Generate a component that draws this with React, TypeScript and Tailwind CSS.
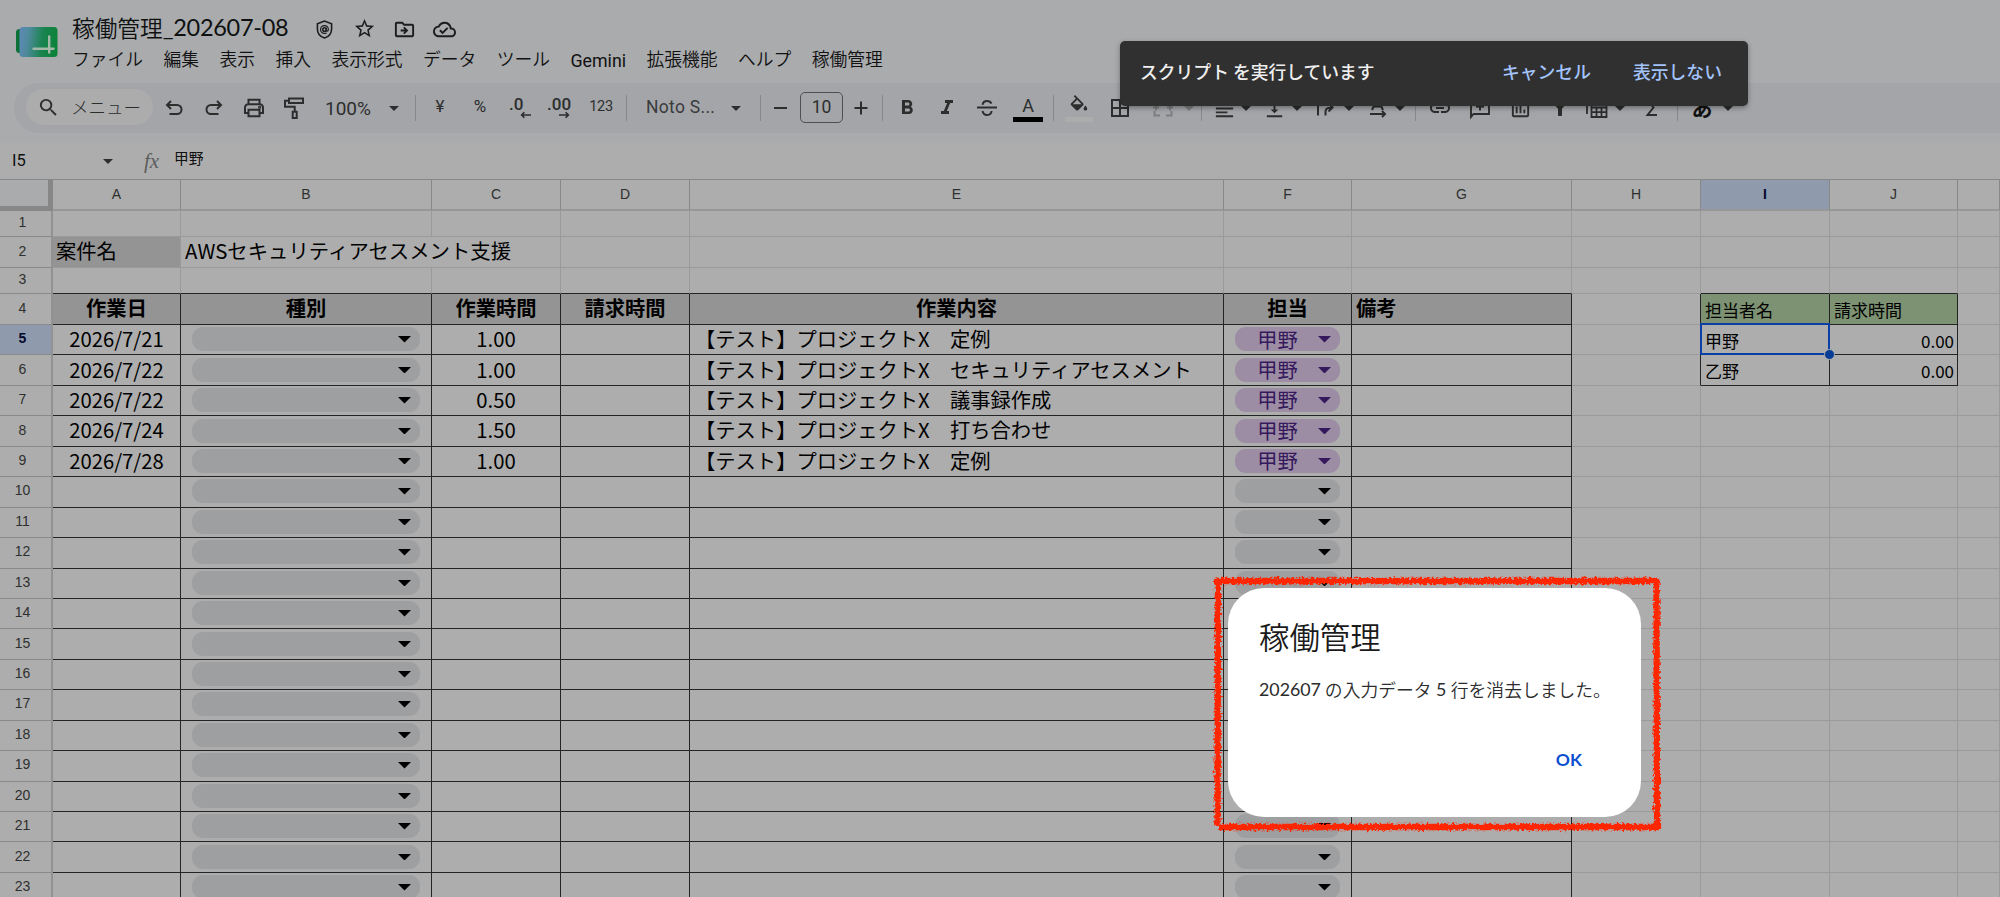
import type { ReactNode } from "react";
import {
  MdBorderAll,
  MdFilterAlt,
  MdFormatAlignLeft,
  MdFormatBold,
  MdFormatItalic,
  MdFunctions,
  MdInsertLink,
  MdOutlineAddComment,
  MdOutlineCloudDone,
  MdOutlineDriveFileMove,
  MdOutlineInsertChart,
  MdSearch,
  MdStarBorder,
  MdVerticalAlignBottom,
} from "react-icons/md";

const COLS =
  "grid grid-cols-[53px_128px_251px_129px_129px_534px_128px_220px_129px_129px_128px_42px]";
const LETTERS = ["A", "B", "C", "D", "E", "F", "G", "H", "I", "J", ""];

const RECORDS: Record<number, { date: string; hours: string; note: string }> = {
  5: { date: "2026/7/21", hours: "1.00", note: "【テスト】プロジェクトX　定例" },
  6: { date: "2026/7/22", hours: "1.00", note: "【テスト】プロジェクトX　セキュリティアセスメント" },
  7: { date: "2026/7/22", hours: "0.50", note: "【テスト】プロジェクトX　議事録作成" },
  8: { date: "2026/7/24", hours: "1.50", note: "【テスト】プロジェクトX　打ち合わせ" },
  9: { date: "2026/7/28", hours: "1.00", note: "【テスト】プロジェクトX　定例" },
};

const MENUS = [
  "ファイル", "編集", "表示", "挿入", "表示形式", "データ", "ツール", "Gemini", "拡張機能", "ヘルプ", "稼働管理",
];

function Caret({ className = "" }: { className?: string }) {
  return (
    <svg viewBox="0 0 10 5" className={`h-[5px] w-[10px] shrink-0 fill-current ${className}`}>
      <path d="M0 0h10L5 5z" />
    </svg>
  );
}

function Divider({ className = "" }: { className?: string }) {
  return <div className={`h-[26px] w-px shrink-0 bg-[#868889] ${className}`} />;
}

function Slot({ className = "", width = "w-6", children }: { className?: string; width?: string; children: ReactNode }) {
  return (
    <div className={`flex h-[50px] shrink-0 items-center justify-center whitespace-nowrap ${width} ${className}`}>
      {children}
    </div>
  );
}

function Logo() {
  return (
    <svg viewBox="0 0 42 30" className="h-[30px] w-[42px] shrink-0">
      <defs>
        <linearGradient id="sheet" x1="0" x2="1" y1="0.4" y2="0.5">
          <stop offset="0" stopColor="#5a8ab4" />
          <stop offset="0.22" stopColor="#4f8a9c" />
          <stop offset="0.6" stopColor="#1a8450" />
          <stop offset="1" stopColor="#0b8238" />
        </linearGradient>
      </defs>
      <rect x="0" y="2" width="20" height="24" rx="3.5" fill="#0a7036" />
      <rect x="3.5" y="0" width="38" height="30" rx="3.5" fill="url(#sheet)" />
      <path d="M33.2 9.5v16M17.5 21.7h20" stroke="#a4b8aa" strokeWidth="2.4" strokeLinecap="round" />
    </svg>
  );
}

function ShieldIcon() {
  return (
    <svg viewBox="0 0 24 24" className="size-[21px]" fill="none" stroke="currentColor" strokeWidth="1.8">
      <path d="M12 2.4 3.9 5.4v6c0 4.9 3.2 8.9 8.1 10.4 4.900-1.500 8.100-5.500 8.100-10.400v-6z" />
      <circle cx="12" cy="12" r="2" />
      <path
        d="M14.100 10v2.900c0 1.400 2.300 1.300 2.300-.9 0-2.600-1.900-4.500-4.400-4.500S7.500 9.500 7.500 12s2 4.500 4.500 4.500c.9 0 1.700-.2 2.400-.6"
        strokeWidth="1.400"
      />
    </svg>
  );
}

function Header() {
  return (
    <header className="flex h-[83px] shrink-0 items-start pl-4 text-[#111]">
      <div className="pt-[27px]">
        <Logo />
      </div>
      <div className="flex flex-col pl-[14px]">
        <div className="flex h-[45px] items-center pt-[11px] text-[#1c1d1e]">
          <span className="font-['Noto_Sans_CJK_JP',sans-serif] text-[22.700px] leading-none font-[350] text-[#0f1010]">
            稼働管理
          </span>
          <span className="w-[126px] font-['Lato',sans-serif] text-[23.500px] leading-none tracking-[-0.3px] whitespace-nowrap text-[#0f1010]">
            _202607-08
          </span>
          <span className="ml-[25px] flex w-[21px] justify-center pt-[2px]"><ShieldIcon /></span>
          <MdStarBorder className="mt-[1px] ml-[18px] size-[23px]" />
          <MdOutlineDriveFileMove className="mt-[2px] ml-[17px] size-[23px]" />
          <MdOutlineCloudDone className="mt-[2px] ml-[17px] size-[23px]" />
        </div>
        <nav className="flex h-[28px] items-center gap-[20.400px] font-['Roboto','Noto_Sans_CJK_JP',sans-serif] text-[17.800px] leading-none font-[350]">
          {MENUS.map((m) =>
            m === "Gemini" ? (
              <span key={m} className="pt-[3px] font-normal">{m}</span>
            ) : (
              <span key={m} className="font-['Noto_Sans_CJK_JP',sans-serif]">{m}</span>
            ),
          )}
        </nav>
      </div>
    </header>
  );
}

function Toolbar() {
  return (
    <div className="ml-[14px] flex h-[50px] shrink-0 items-center rounded-l-full bg-[#a3a5a9] pl-3 font-['Roboto','Noto_Sans_CJK_JP',sans-serif] text-[#2c2e2d]">
      <div className="mb-[2px] flex h-[36px] w-[127px] shrink-0 items-center rounded-full bg-[#acacad] pl-[11px]">
        <MdSearch className="size-[23px]" />
        <span className="ml-[11px] font-['Noto_Sans_CJK_JP',sans-serif] text-[17.500px] leading-none font-light">メニュー</span>
      </div>
      <Slot className="ml-[9px]">
        <svg viewBox="0 0 24 24" className="size-6" fill="none" stroke="currentColor" strokeWidth="2">
          <path d="M9 5 5 9l4 4M5.500 9H15a4.500 4.500 0 0 1 0 9H7.500" />
        </svg>
      </Slot>
      <Slot className="ml-4">
        <svg viewBox="0 0 24 24" className="size-6" fill="none" stroke="currentColor" strokeWidth="2">
          <path d="m15 5 4 4-4 4M18.500 9H9a4.500 4.500 0 0 0 0 9h7.500" />
        </svg>
      </Slot>
      <Slot className="ml-4">
        <svg viewBox="0 0 24 24" className="size-6" fill="none" stroke="currentColor" strokeWidth="2">
          <path d="M6.500 8V3.800h11V8M6.500 17H3V11.500A3.200 3.200 0 0 1 6.200 8.300h11.600a3.200 3.200 0 0 1 3.200 3.200V17h-3.500M6.500 13.800h11v6.400h-11z" />
          <circle cx="17.600" cy="11.300" r=".6" />
        </svg>
      </Slot>
      <Slot className="ml-4">
        <svg viewBox="0 0 24 24" className="size-6" fill="none" stroke="currentColor" strokeWidth="2">
          <path d="M7 2.500h14v4.500H7zM7 4.700H3v6h9.700v5M10.700 15.700h4v6.300h-4z" />
        </svg>
      </Slot>
      <span className="ml-[19px] w-[46px] shrink-0 pt-px text-[19px] leading-none">100%</span>
      <Caret className="ml-[18px]" />
      <Divider className="ml-4" />
      <Slot className="ml-3 pb-[2px] text-[17px]">¥</Slot>
      <Slot className="ml-4 pb-[2px] text-[17px]">%</Slot>
      <Slot className="ml-4">
        <div className="relative flex h-[22px] w-[22px] items-start text-[17px] leading-[14px] font-medium">
          <span>.0</span>
          <svg viewBox="0 0 12 8" className="absolute right-0 bottom-0 h-[8px] w-[11px]" fill="none" stroke="currentColor" strokeWidth="1.800">
            <path d="M12 4H2M4.800 1 1.800 4l3 3" />
          </svg>
        </div>
      </Slot>
      <Slot width="w-[26px]" className="ml-[14px]">
        <div className="relative flex h-[22px] w-[24px] items-start text-[17px] leading-[14px] font-medium">
          <span>.00</span>
          <svg viewBox="0 0 12 8" className="absolute right-[1px] bottom-0 h-[8px] w-[11px]" fill="none" stroke="currentColor" strokeWidth="1.800">
            <path d="M0 4h10M7.200 1l3 3-3 3" />
          </svg>
        </div>
      </Slot>
      <Slot className="ml-[17px] pb-[3px] text-[14.500px] tracking-[-0.3px]">123</Slot>
      <Divider className="ml-[13px]" />
      <span className="ml-[19px] w-[70px] shrink-0 text-[17.500px] leading-none tracking-[0.3px] whitespace-nowrap text-[#3a3b3c]">Noto S...</span>
      <Caret className="ml-[15px]" />
      <Divider className="ml-[19px]" />
      <Slot width="w-4" className="ml-[11px]">
        <div className="h-[2px] w-[13px] bg-[#2c2e2d]" />
      </Slot>
      <div className="mb-px ml-3 flex h-[31px] w-[43px] shrink-0 items-center justify-center rounded-[5px] border border-[#4d4f50] text-[17.500px] leading-none">
        10
      </div>
      <Slot width="w-4" className="ml-[10px]">
        <svg viewBox="0 0 14 14" className="size-[14px]" stroke="currentColor" strokeWidth="2"><path d="M7 .5v13M.5 7h13" /></svg>
      </Slot>
      <Divider className="ml-[13px]" />
      <Slot className="ml-3"><MdFormatBold className="size-[24px]" /></Slot>
      <Slot className="ml-4"><MdFormatItalic className="size-[24px]" /></Slot>
      <Slot className="ml-4">
        <svg viewBox="0 0 24 24" className="size-6" fill="none" stroke="currentColor" strokeWidth="2">
          <path d="M2 11.500h20M7.500 8.700C8 6.300 9.700 5 12 5c2.100 0 3.700 1 4.400 2.700M7.500 15c.6 2.700 2.200 4 4.500 4 2.500 0 4.300-1.400 4.600-4" />
        </svg>
      </Slot>
      <div className="ml-[14px] flex w-[30px] shrink-0 flex-col items-center pt-px">
        <span className="text-[18px] leading-[19px]">A</span>
        <div className="mt-[2px] h-[5px] w-full bg-black" />
      </div>
      <Divider className="ml-[10px]" />
      <div className="ml-[11px] flex w-[28px] shrink-0 flex-col items-center">
        <svg viewBox="0 0 24 24" className="h-[22px] w-[22px] fill-current">
          <path d="M16.560 8.940 7.620 0 6.210 1.410l2.380 2.380-5.150 5.150c-.59.59-.59 1.540 0 2.120l5.500 5.500c.29.29.68.44 1.060.44s.77-.15 1.060-.44l5.500-5.500c.59-.58.59-1.530 0-2.120zM5.210 10 10 5.210 14.790 10zM19 11.500s-2 2.170-2 3.500c0 1.100.9 2 2 2s2-.9 2-2c0-1.330-2-3.500-2-3.500z" />
        </svg>
        <div className="h-[5px] w-full bg-[#acacac]" />
      </div>
      <Slot className="ml-[15px]"><MdBorderAll className="size-[24px]" /></Slot>
      <Slot className="ml-[19px] text-[#7d7f81]">
        <svg viewBox="0 0 24 24" className="size-6" fill="none" stroke="currentColor" strokeWidth="2">
          <path d="M3.500 8V4H9M3.500 15v4.500H9M20.500 8V4H15M20.500 15v4.500H15M2 11.500h6M5 8.500v6M22 11.500h-6M19 8.500v6" />
        </svg>
      </Slot>
      <Caret className="ml-[9px] text-[#7d7f81]" />
      <Divider className="ml-[7px]" />
      <Slot className="ml-[10px]"><MdFormatAlignLeft className="size-[23px]" /></Slot>
      <Caret className="ml-[5px]" />
      <Slot className="ml-[11px]"><MdVerticalAlignBottom className="size-[23px]" /></Slot>
      <Caret className="ml-[6px]" />
      <Slot className="ml-[11px]">
        <svg viewBox="0 0 24 24" className="size-6" fill="none" stroke="currentColor" strokeWidth="2">
          <path d="M5 3v16.500M12.500 19.500v-4a3.500 3.500 0 0 1 3.500-3.500h3M12.500 3v4M15.500 7.500l4 4-4 4" />
        </svg>
      </Slot>
      <Caret className="ml-[7px]" />
      <Slot className="ml-3">
        <svg viewBox="0 0 24 24" className="size-6" fill="none" stroke="currentColor" strokeWidth="2">
          <path d="M6 14 11.500 2 17 14M8 10.500h7M4 18h15M16 15l3 3-3 3" />
        </svg>
      </Slot>
      <Caret className="ml-[5px]" />
      <Divider className="ml-[10px]" />
      <Slot className="ml-3"><MdInsertLink className="size-[24px]" /></Slot>
      <Slot className="ml-4">
        <svg viewBox="0 0 24 24" className="size-6" fill="none" stroke="currentColor" strokeWidth="1.900">
          <path d="M3 21V3.500h18V18H5.500zM12 6.500v8M8 10.500h8" />
        </svg>
      </Slot>
      <Slot className="ml-4"><MdOutlineInsertChart className="size-[23px]" /></Slot>
      <Slot className="ml-4"><MdFilterAlt className="size-[24px]" /></Slot>
      <Slot className="ml-[13px]">
        <svg viewBox="0 0 24 24" className="size-6" fill="none" stroke="currentColor" strokeWidth="1.800">
          <path d="M2 18V3h17M6.500 7h15v14h-15zM6.500 11.500h15M6.500 16.200h15M11.500 11.500V21M16.500 11.500V21" />
        </svg>
      </Slot>
      <Caret className="ml-[6px]" />
      <Slot className="ml-[15px]">
        <svg viewBox="0 0 24 24" className="size-6" fill="none" stroke="currentColor" strokeWidth="2">
          <path d="M17 4H7.500l6 7.500-6 7.500H17" />
        </svg>
      </Slot>
      <Divider className="ml-[13px]" />
      <Slot className="ml-3 font-['Noto_Sans_CJK_JP',sans-serif] text-[21px] font-bold text-[#111]">あ</Slot>
      <Caret className="ml-[9px]" />
    </div>
  );
}

function FormulaBar() {
  return (
    <div className="flex h-[36px] shrink-0 items-center bg-[#adadad] text-[#111]">
      <span className="w-[103px] pl-[12px] font-['Roboto',sans-serif] text-[16.500px] leading-none">I5</span>
      <Caret className="text-[#2c2e2d]" />
      <span className="ml-[31px] w-[30px] font-['Liberation_Serif',serif] text-[21px] leading-none text-[#5c5d5e] italic">fx</span>
      <span className="pb-[5px] font-['Noto_Sans_CJK_JP',sans-serif] text-[14.800px] leading-none">甲野</span>
    </div>
  );
}

function ColumnHeader() {
  return (
    <div className={`${COLS} h-[32px] shrink-0 border-t border-[#878787]`}>
      <div className="border-r-[5px] border-b-[5px] border-[#878787] bg-[#a9abad]" />
      {LETTERS.map((l, i) => (
        <div
          key={i}
          className={`flex items-center justify-center border-r border-b-2 border-r-[#888] border-b-[#979797] pb-px font-['Liberation_Sans',sans-serif] text-[14px] leading-none ${
            l === "I" ? "bg-[#8f9aac] font-bold text-[#040a2c]" : "text-[#2e302f]"
          }`}
        >
          {l}
        </div>
      ))}
    </div>
  );
}

function Chip({ name }: { name?: string }) {
  return (
    <div
      className={`relative mx-[11px] mb-px flex h-[24px] w-full items-center justify-center rounded-[11px] pr-[20px] ${
        name ? "bg-[#9c8da5] text-[#35195c]" : "bg-[#9e9fa1] text-black"
      }`}
    >
      <span className="pb-px">{name}</span>
      <Caret className="absolute top-[9px] right-[9px] h-[6.500px]! w-[13px]!" />
    </div>
  );
}

const GRID_LINE = "border-[#9a9a9a]";
const DARK_LINE = "border-[#242424]";

function cellLook(row: number, col: string): string {
  const main = "ABCDEFG".includes(col) && col !== "";
  const side = col === "I" || col === "J";
  let line = `${GRID_LINE} border-r border-b`;
  if (main && row >= 4) line = `${DARK_LINE} border-r border-b`;
  else if (main && row === 3) line = "border-r border-b border-r-[#9a9a9a] border-b-[#242424]";
  else if (side && row >= 4 && row <= 6) line = `${DARK_LINE} border-r border-b`;
  else if (side && row === 3) line = "border-r border-b border-r-[#9a9a9a] border-b-[#242424]";
  else if (col === "H" && row >= 4 && row <= 6) line = "border-r border-b border-r-[#242424] border-b-[#9a9a9a]";
  else if (col === "B" && row === 2) line = "border-b border-[#9a9a9a]";
  let bg = "";
  if ((main && row === 4) || (row === 2 && col === "A")) bg = "bg-[#949494]";
  if (side && row === 4) bg = "bg-[#7c9272]";
  return `${line} ${bg}`;
}

const HEADINGS: Record<string, string> = {
  A: "作業日", B: "種別", C: "作業時間", D: "請求時間", E: "作業内容", F: "担当", G: "備考",
};

function CellBody({ row, col }: { row: number; col: string }) {
  const record = RECORDS[row];
  if (row === 2 && col === "A") return <span className="pb-[3px] pl-[3px]">案件名</span>;
  if (row === 2 && col === "B")
    return <span className="pb-[3px] pl-[4px] text-[20.400px]">AWSセキュリティアセスメント支援</span>;
  if (row === 4 && HEADINGS[col])
    return <span className={`pb-[3px] font-bold ${col === "G" ? "pl-[4px]" : "mx-auto"}`}>{HEADINGS[col]}</span>;
  if (row >= 5 && col === "B") return <Chip />;
  if (row >= 5 && col === "F") return <Chip name={record ? "甲野" : undefined} />;
  if (record && col === "A") return <span className="mx-auto pb-[3px]">{record.date}</span>;
  if (record && col === "C") return <span className="mx-auto pb-[3px]">{record.hours}</span>;
  if (record && col === "E") return <span className="pb-[3px] pl-[5px]">{record.note}</span>;
  if (col === "I" || col === "J") {
    const side: Record<string, string> = {
      I4: "担当者名", J4: "請求時間", I5: "甲野", J5: "0.00", I6: "乙野", J6: "0.00",
    };
    const value = side[`${col}${row}`];
    if (value)
      return (
        <span className={`pt-px text-[17px] ${value === "0.00" ? "ml-auto pr-[3px]" : "pl-[4px]"}`}>{value}</span>
      );
  }
  return null;
}

function Row({ row }: { row: number }) {
  const height = row === 1 || row === 3 ? "h-[26px]" : row === 2 || row === 4 ? "h-[31px]" : "h-[30.450px]";
  return (
    <div className={`${COLS} ${height} shrink-0`}>
      <div
        className={`flex items-center justify-center border-r-2 border-b border-r-[#929292] border-b-[#8a8a8a] pr-[6px] pb-[3px] font-['Liberation_Sans',sans-serif] text-[14px] leading-none ${
          row === 5 ? "bg-[#8f9aac] font-bold text-[#040a2c]" : "text-[#2e302f]"
        }`}
      >
        {row}
      </div>
      {LETTERS.map((col, i) => (
        <div
          key={i}
          className={`relative flex min-w-0 items-center leading-none whitespace-nowrap ${cellLook(row, col)}`}
        >
          <CellBody row={row} col={col} />
          {row === 5 && col === "I" && (
            <>
              <div className="absolute -top-[2px] -right-px -bottom-px -left-px border-2 border-[#0a3fa5]" />
              <div className="absolute -right-[6px] -bottom-[6px] z-10 size-[11px] rounded-full border border-[#adadad] bg-[#083d96]" />
            </>
          )}
        </div>
      ))}
    </div>
  );
}

function Toast() {
  return (
    <div className="absolute top-[41px] left-[1120px] flex h-[65px] w-[628px] items-center rounded-[5px] bg-[#303030] pb-[4px] pl-[20px] font-['Noto_Sans_CJK_JP',sans-serif] text-[17.800px] leading-none font-medium text-[#efefef] shadow-[0_2px_5px_rgba(0,0,0,0.35)]">
      <span className="w-[362px]">スクリプト を実行しています</span>
      <span className="w-[131px] text-[#a3c3fb]">キャンセル</span>
      <span className="text-[#a3c3fb]">表示しない</span>
    </div>
  );
}

function Dialog() {
  return (
    <div className="absolute top-[588px] left-[1228px] flex h-[229px] w-[413px] flex-col rounded-[36px] bg-white pl-[31px] font-['Noto_Sans_CJK_JP',sans-serif]">
      <h1 className="mt-[32px] text-[30.400px] leading-[32px] font-[350] text-[#1a1a1a]">稼働管理</h1>
      <p className="mt-[27px] flex items-center text-[17.800px] leading-[20px] font-[350] whitespace-pre text-[#2c2c2c]">
        <span className="font-['Lato',sans-serif] font-normal">202607</span>
        <span> の入力データ </span>
        <span className="px-[0.500px] font-['Lato',sans-serif] font-normal">5</span>
        <span> 行を消去しました。</span>
      </p>
      <button className="mt-[51px] mr-[59px] self-end font-['Lato',sans-serif] text-[17.500px] leading-[20px] font-bold text-[#0b50d0]">
        OK
      </button>
    </div>
  );
}

function Marker() {
  return (
    <svg viewBox="0 0 460 268" className="absolute top-[571px] left-[1207px] h-[268px] w-[460px]">
      <defs>
        <filter id="rough" x="-5%" y="-5%" width="110%" height="110%">
          <feTurbulence type="fractalNoise" baseFrequency="0.4" numOctaves="3" seed="4" result="n" />
          <feDisplacementMap in="SourceGraphic" in2="n" scale="6" xChannelSelector="R" yChannelSelector="G" />
        </filter>
      </defs>
      <path
        d="M7 10H452M449.500 8.500L450 257M452 256L12 256M10.500 255L11 7.500"
        fill="none"
        stroke="#ff2600"
        strokeWidth="6.300"
        filter="url(#rough)"
      />
    </svg>
  );
}

export default function App() {
  return (
    <div className="relative flex h-[897px] w-[2000px] flex-col overflow-hidden bg-[#a9abad]">
      <Header />
      <Toolbar />
      <div className="h-[10px] shrink-0" />
      <FormulaBar />
      <main className="flex min-h-0 flex-1 flex-col bg-[#adadad] font-['Noto_Sans_CJK_JP',sans-serif] text-[20.300px] text-black">
        <ColumnHeader />
        {Array.from({ length: 23 }, (_, i) => (
          <Row key={i} row={i + 1} />
        ))}
      </main>
      <Toast />
      <Dialog />
      <Marker />
    </div>
  );
}
